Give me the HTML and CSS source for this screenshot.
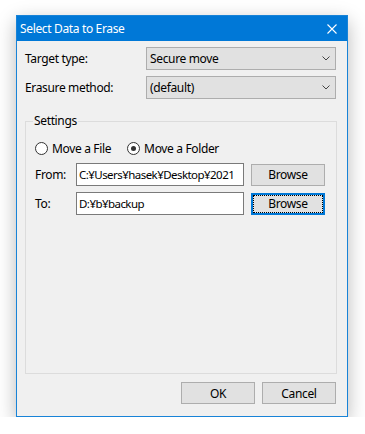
FILE: index.html
```html
<!DOCTYPE html>
<html lang="en">
<head>
    <meta charset="UTF-8" />
    <title>Select Data to Erase</title>
    <link rel="stylesheet" href="styles.css">
</head>
<body>
    <div class="window">
        <div class="titlebar">
            <span class="title">Select Data to Erase</span>
            <svg class="close" width="10" height="10" viewBox="0 0 10 10">
                <path d="M0.5 0.5 L9.5 9.5 M9.5 0.5 L0.5 9.5" stroke="#fff" stroke-width="1.1" fill="none" />
            </svg>
        </div>

        <div class="content">
            <div class="row">
                <span class="label">Target type:</span>
                <div class="combo">
                    <span>Secure move</span>
                    <svg width="8" height="5" viewBox="0 0 8 5"><path d="M0.5 0.5 L4 4 L7.5 0.5" stroke="#444" fill="none" /></svg>
                </div>
            </div>
            <div class="row">
                <span class="label">Erasure method:</span>
                <div class="combo">
                    <span>(default)</span>
                    <svg width="8" height="5" viewBox="0 0 8 5"><path d="M0.5 0.5 L4 4 L7.5 0.5" stroke="#444" fill="none" /></svg>
                </div>
            </div>

            <fieldset class="group">
                <legend>Settings</legend>

                <div class="radios">
                    <label class="radio"><span class="dot"></span>Move a File</label>
                    <label class="radio checked"><span class="dot"></span>Move a Folder</label>
                </div>

                <div class="path-row">
                    <span class="path-label">From:</span>
                    <div class="textbox">C:¥Users¥hasek¥Desktop¥2021</div>
                    <button class="btn">Browse</button>
                </div>
                <div class="path-row">
                    <span class="path-label">To:</span>
                    <div class="textbox">D:¥b¥backup</div>
                    <button class="btn focused">Browse</button>
                </div>
            </fieldset>

            <div class="actions">
                <button class="btn">OK</button>
                <button class="btn">Cancel</button>
            </div>
        </div>
    </div>
</body>
</html>
```

FILE: styles.css
```css
body {
    margin: 0;
    background-color: #ffffff;
    font-family: "Noto Sans", Arial, sans-serif;
    font-size: 12px;
    letter-spacing: -0.35px;
    color: #000;
}
.window {
    margin: 15px 0 0 16px;
    width: 330px;
    height: 400px;
    border: 1px solid #1883d7;
    background-color: #f0f0f0;
    box-shadow: 0 6px 18px rgba(0, 0, 0, 0.28);
    display: flex;
    flex-direction: column;
}
.titlebar {
    height: 25px;
    background-color: #0078d7;
    color: #fff;
    display: flex;
    align-items: center;
    justify-content: space-between;
    padding: 0 10px 0 3px;
    flex-shrink: 0;
}
.title {
    font-size: 12px;
}
.content {
    flex: 1;
    display: flex;
    flex-direction: column;
    padding: 6px 10px 12px 8px;
}
.row {
    display: flex;
    align-items: center;
    height: 23px;
    margin-bottom: 6px;
}
.label {
    width: 121px;
}
.combo {
    width: 190px;
    height: 23px;
    box-sizing: border-box;
    border: 1px solid #adadad;
    background-color: #e1e1e1;
    display: flex;
    align-items: center;
    justify-content: space-between;
    padding: 0 5px 0 3px;
}
.group {
    flex: 1;
    margin: 8px 0 0 0;
    padding: 0 9px;
    border: 1px solid #dcdcdc;
    min-width: 0;
}
.group legend {
    padding: 0 1px;
    margin-left: -2px;
    line-height: 16px;
}
.radios {
    display: flex;
    align-items: center;
    gap: 16px;
    height: 16px;
    margin-top: 11px;
}
.radio {
    display: flex;
    align-items: center;
    gap: 4px;
}
.dot {
    width: 11px;
    height: 11px;
    border: 1px solid #333;
    border-radius: 50%;
    background-color: #fff;
    display: flex;
    align-items: center;
    justify-content: center;
}
.checked .dot::after {
    content: "";
    width: 5px;
    height: 5px;
    border-radius: 50%;
    background-color: #333;
}
.path-row {
    display: flex;
    align-items: center;
    height: 23px;
    margin-top: 6px;
}
.radios + .path-row {
    margin-top: 7px;
}
.path-label {
    width: 41px;
}
.textbox {
    width: 168px;
    height: 23px;
    box-sizing: border-box;
    border: 1px solid #7a7a7a;
    background-color: #fff;
    padding: 0 2px;
    font-size: 11.5px;
    letter-spacing: -0.55px;
    line-height: 21px;
    white-space: nowrap;
    overflow: hidden;
    margin-right: 7px;
}
.btn {
    width: 74px;
    height: 22px;
    border: 1px solid #adadad;
    background-color: #e1e1e1;
    font-family: inherit;
    font-size: 12px;
    letter-spacing: -0.35px;
    color: #000;
    padding: 0;
}
.btn.focused {
    border: 2px solid #0078d7;
    outline: 1px dotted #000;
    outline-offset: -3px;
}
.actions {
    display: flex;
    justify-content: flex-end;
    gap: 7px;
    margin: 8px 1px 0 0;
}
```
